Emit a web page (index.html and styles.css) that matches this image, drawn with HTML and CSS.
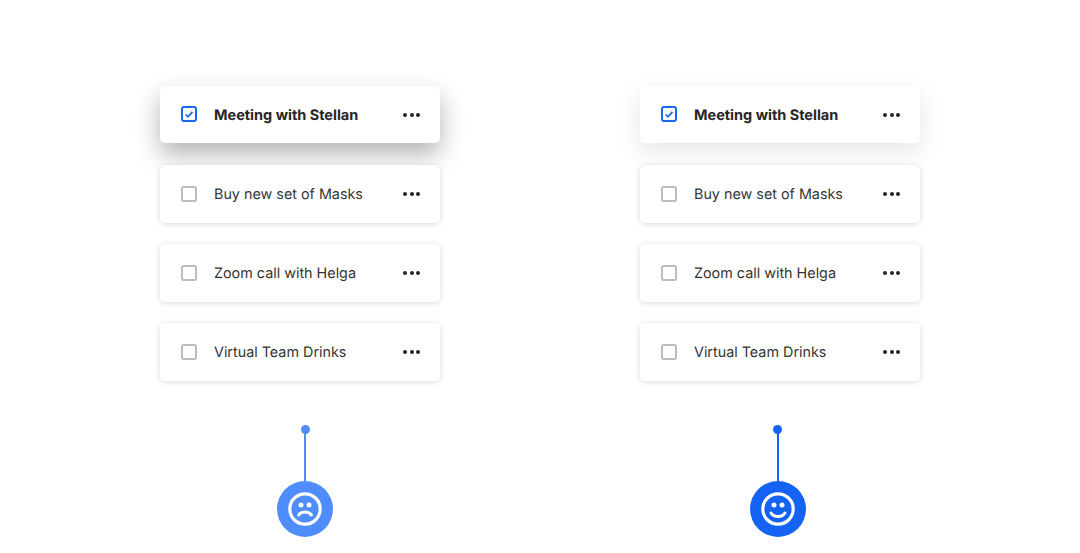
FILE: index.html
```html
<!DOCTYPE html>
<html lang="en">
<head>
<meta charset="utf-8">
<title>Shadow comparison</title>
<link rel="stylesheet" href="styles.css">
</head>
<body>
<main class="compare">
  <section class="column column-bad">
    <ul class="list">
      <li class="card card-top card-strong">
        <svg class="check" viewBox="0 0 18 18"><rect class="check-on" x="2" y="2" width="14" height="14" rx="2"/><path class="tick" d="M5.800 9.600l2.200 2.200 4.400-5"/></svg>
        <span class="label label-bold">Meeting with Stellan</span>
        <span class="dots"><i></i><i></i><i></i></span>
      </li>
      <li class="card">
        <svg class="check" viewBox="0 0 18 18"><rect class="check-off" x="2" y="2" width="14" height="14" rx="1.500"/></svg>
        <span class="label">Buy new set of Masks</span>
        <span class="dots"><i></i><i></i><i></i></span>
      </li>
      <li class="card">
        <svg class="check" viewBox="0 0 18 18"><rect class="check-off" x="2" y="2" width="14" height="14" rx="1.500"/></svg>
        <span class="label">Zoom call with Helga</span>
        <span class="dots"><i></i><i></i><i></i></span>
      </li>
      <li class="card">
        <svg class="check" viewBox="0 0 18 18"><rect class="check-off" x="2" y="2" width="14" height="14" rx="1.500"/></svg>
        <span class="label">Virtual Team Drinks</span>
        <span class="dots"><i></i><i></i><i></i></span>
      </li>
    </ul>
    <div class="marker marker-bad">
      <span class="pin"></span>
      <span class="stem"></span>
      <span class="badge">
        <svg class="face" viewBox="0 0 36 36"><circle class="face-ring" cx="18" cy="18" r="15.200"/><circle class="eye" cx="14" cy="14" r="2.500"/><circle class="eye" cx="22" cy="14" r="2.500"/><path class="mouth" d="M11.600 24c1.400-1.900 3.500-2.900 6.400-2.900s5 1 6.400 2.900"/></svg>
      </span>
    </div>
  </section>
  <section class="column column-good">
    <ul class="list">
      <li class="card card-top card-soft">
        <svg class="check" viewBox="0 0 18 18"><rect class="check-on" x="2" y="2" width="14" height="14" rx="2"/><path class="tick" d="M5.800 9.600l2.200 2.200 4.400-5"/></svg>
        <span class="label label-bold">Meeting with Stellan</span>
        <span class="dots"><i></i><i></i><i></i></span>
      </li>
      <li class="card">
        <svg class="check" viewBox="0 0 18 18"><rect class="check-off" x="2" y="2" width="14" height="14" rx="1.500"/></svg>
        <span class="label">Buy new set of Masks</span>
        <span class="dots"><i></i><i></i><i></i></span>
      </li>
      <li class="card">
        <svg class="check" viewBox="0 0 18 18"><rect class="check-off" x="2" y="2" width="14" height="14" rx="1.500"/></svg>
        <span class="label">Zoom call with Helga</span>
        <span class="dots"><i></i><i></i><i></i></span>
      </li>
      <li class="card">
        <svg class="check" viewBox="0 0 18 18"><rect class="check-off" x="2" y="2" width="14" height="14" rx="1.500"/></svg>
        <span class="label">Virtual Team Drinks</span>
        <span class="dots"><i></i><i></i><i></i></span>
      </li>
    </ul>
    <div class="marker marker-good">
      <span class="pin"></span>
      <span class="stem"></span>
      <span class="badge">
        <svg class="face" viewBox="0 0 36 36"><circle class="face-ring" cx="18" cy="18" r="15.200"/><circle class="eye" cx="14" cy="14" r="2.500"/><circle class="eye" cx="22" cy="14" r="2.500"/><path class="mouth" d="M11 22c1.500 2.400 3.800 3.500 7 3.500s5.500-1.100 7-3.500"/></svg>
      </span>
    </div>
  </section>
</main>
</body>
</html>
```
FILE: styles.css
```css
* { box-sizing: border-box; }
html, body { margin: 0; background: #fff; }
body { width: 1080px; height: 553px; overflow: hidden; font-family: Inter, "Liberation Sans", sans-serif; color: #262626; text-rendering: geometricPrecision; }
.compare { display: flex; gap: 200px; padding: 86px 0 0 160px; }
.column { width: 280px; display: flex; flex-direction: column; }
.list { list-style: none; margin: 0; padding: 0; display: flex; flex-direction: column; gap: 21.500px; }
.card { height: 57.500px; border-radius: 5px; background: #fff; display: flex; align-items: center; padding: 0 20px; box-shadow: 0 1px 6px rgba(0,0,0,.15); }
.card-top { height: 57px; margin-bottom: .5px; }
.card-top .check { margin-bottom: 1px; }
.card-strong { box-shadow: 0 11px 24px rgba(0,0,0,.3); }
.card-soft { box-shadow: 0 8px 24px rgba(0,0,0,.1); }
.check { width: 18px; height: 18px; flex: none; margin-right: 16px; }
.check-on { fill: none; stroke: #1b66f0; stroke-width: 2; }
.check-off { fill: none; stroke: #bdbdbd; stroke-width: 2; }
.tick { fill: none; stroke: #1b66f0; stroke-width: 1.800; }
.label { flex: 1; font-size: 14.350px; line-height: 20px; color: #333; padding-top: 3px; }
.label-bold { font-size: 14.500px; font-weight: 700; color: #262626; padding-top: 3px; }
.dots { display: flex; gap: 2.500px; }
.dots i { width: 4px; height: 4px; border-radius: 50%; background: #262626; }
.marker { width: 56px; display: flex; flex-direction: column; align-items: center; margin-top: 44.500px; }
.marker-bad { margin-left: 117px; --tone: #4f8cff; }
.marker-good { margin-left: 109.500px; --tone: #1463f5; }
.pin { width: 9px; height: 9px; border-radius: 50%; background: var(--tone); }
.stem { width: 2px; height: 48px; margin-top: -1px; background: var(--tone); }
.badge { width: 56px; height: 56px; border-radius: 50%; background: var(--tone); display: flex; align-items: center; justify-content: center; }
.face { width: 36px; height: 36px; }
.face-ring { fill: none; stroke: #fff; stroke-width: 3.200; }
.eye { fill: #fff; }
.mouth { fill: none; stroke: #fff; stroke-width: 3; stroke-linecap: round; }
```
